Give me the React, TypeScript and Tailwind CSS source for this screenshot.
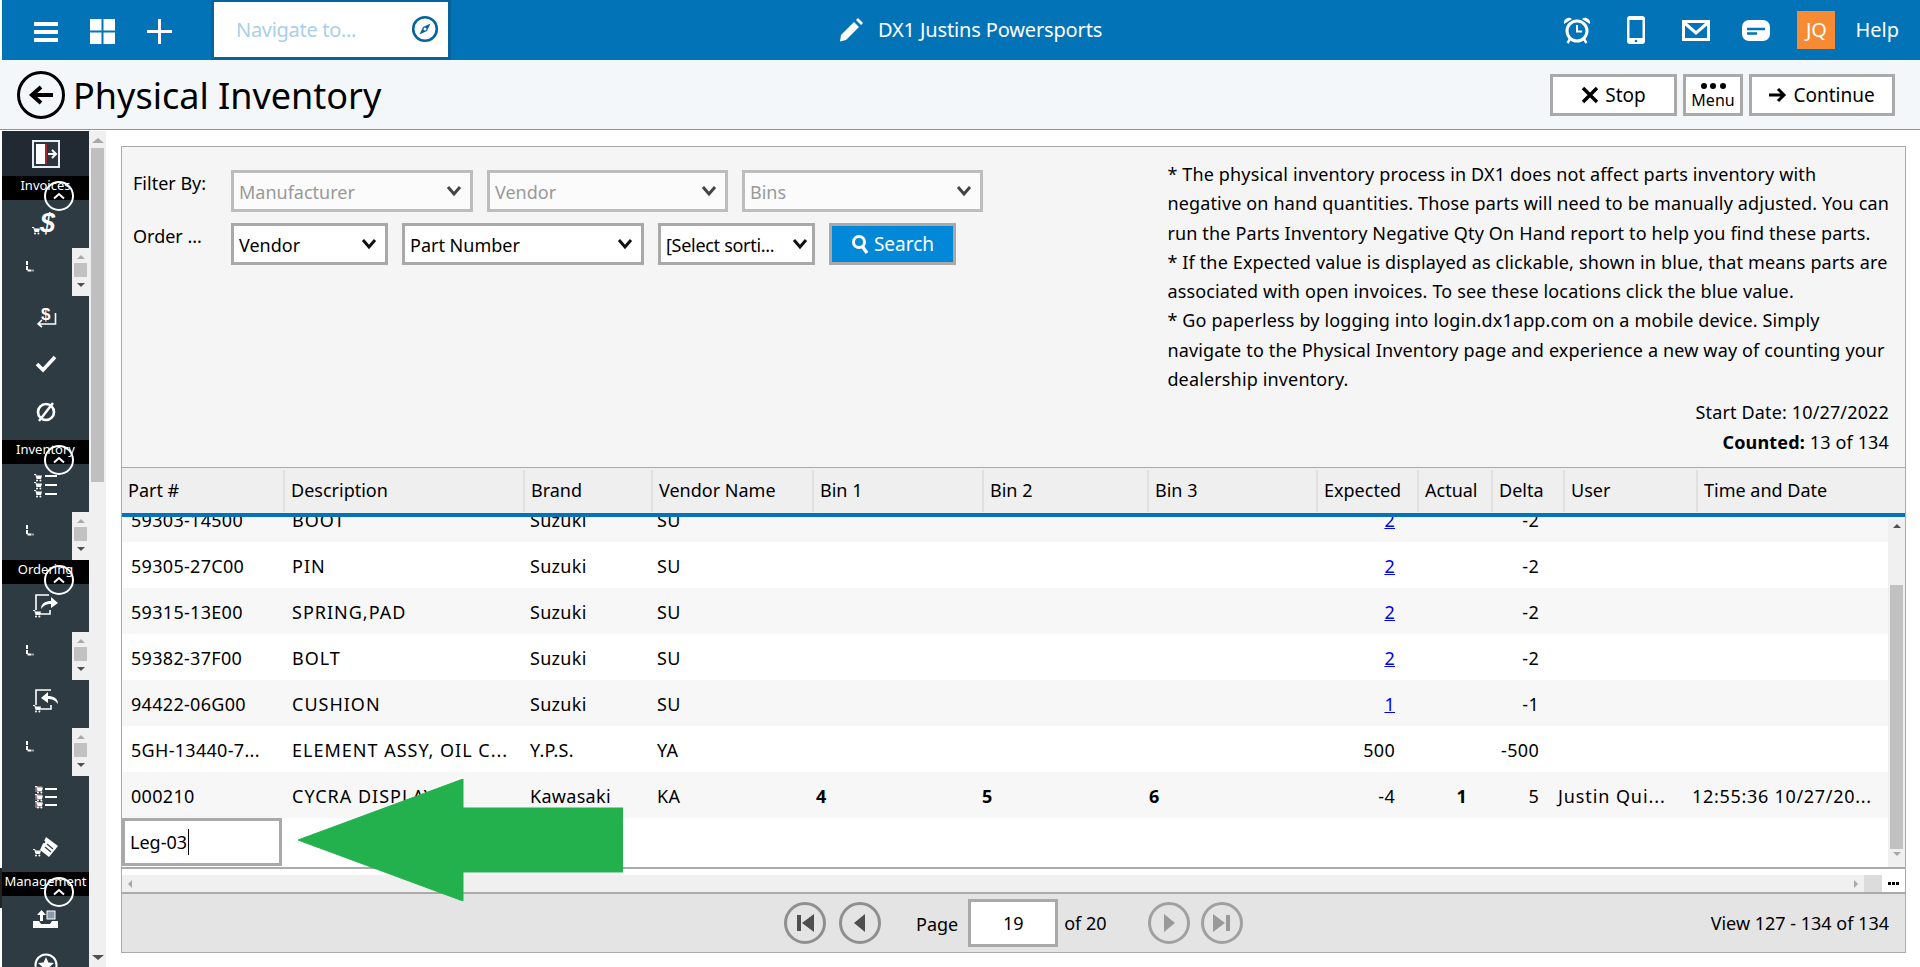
import type { ReactNode } from "react";

const FONT = "font-['Noto_Sans','Open_Sans',sans-serif]";
const HEAD_COLS = "grid grid-cols-[161px_240px_128px_161px_170px_165px_169px_101px_74px_72px_133px_210px]";
const BODY_COLS = "grid grid-cols-[163px_238px_127px_159px_166px_167px_167px_93px_72px_72px_140px_203px]";

const headers = ["Part #", "Description", "Brand", "Vendor Name", "Bin 1", "Bin 2", "Bin 3", "Expected", "Actual", "Delta", "User", "Time and Date"];

const rows = [
  { part: "59303-14500", desc: "BOOT", brand: "Suzuki", vendor: "SU", expected: "2", delta: "-2", link: true },
  { part: "59305-27C00", desc: "PIN", brand: "Suzuki", vendor: "SU", expected: "2", delta: "-2", link: true },
  { part: "59315-13E00", desc: "SPRING,PAD", brand: "Suzuki", vendor: "SU", expected: "2", delta: "-2", link: true },
  { part: "59382-37F00", desc: "BOLT", brand: "Suzuki", vendor: "SU", expected: "2", delta: "-2", link: true },
  { part: "94422-06G00", desc: "CUSHION", brand: "Suzuki", vendor: "SU", expected: "1", delta: "-1", link: true },
  { part: "5GH-13440-7...", desc: "ELEMENT ASSY, OIL C...", brand: "Y.P.S.", vendor: "YA", expected: "500", delta: "-500" },
  { part: "000210", desc: "CYCRA DISPLAY", brand: "Kawasaki", vendor: "KA", bin1: "4", bin2: "5", bin3: "6", expected: "-4", actual: "1", delta: "5", user: "Justin Qui...", time: "12:55:36 10/27/20..." },
];

const notes = [
  "* The physical inventory process in DX1 does not affect parts inventory with",
  "negative on hand quantities. Those parts will need to be manually adjusted. You can",
  "run the Parts Inventory Negative Qty On Hand report to help you find these parts.",
  "* If the Expected value is displayed as clickable, shown in blue, that means parts are",
  "associated with open invoices. To see these locations click the blue value.",
  "* Go paperless by logging into login.dx1app.com on a mobile device. Simply",
  "navigate to the Physical Inventory page and experience a new way of counting your",
  "dealership inventory.",
];

function Chevron({ color = "#111" }: { color?: string }) {
  return (
    <svg width="16" height="12" viewBox="0 0 16 12" className="shrink-0">
      <path d="M2 2l6 7 6-7" fill="none" stroke={color} strokeWidth="3" />
    </svg>
  );
}

function Select({ label, width, disabled }: { label: string; width: string; disabled?: boolean }) {
  return (
    <div className={`${width} h-[42px] flex items-center justify-between pl-[5px] pr-[8px] border-[3px] whitespace-nowrap ${disabled ? "border-[#bdbdbd] bg-[#fbfbfb] text-[#999]" : "border-[#a9a9a9] bg-white text-black"}`}>
      <span className="pt-[2px]">{label}</span>
      <Chevron color={disabled ? "#444" : "#111"} />
    </div>
  );
}

function TopButton({ children, width }: { children: ReactNode; width: string }) {
  return <div className={`${width} h-[42px] flex items-center justify-center gap-[6px] border-[3px] border-[#a9a9a9] bg-white`}>{children}</div>;
}

function Band({ label }: { label: string }) {
  return (
    <div className="relative h-[24px] bg-black text-white text-[13px] leading-[18px] text-center whitespace-nowrap">
      {label}
      <div className="absolute left-[42px] top-[5px] w-[30px] h-[30px] rounded-full border-[2.5px] border-white flex items-center justify-center">
        <svg width="14" height="8" viewBox="0 0 14 8"><path d="M2 6.5l5-4.5 5 4.5" fill="none" stroke="white" strokeWidth="2" /></svg>
      </div>
    </div>
  );
}

function SideIcon({ h, children }: { h: string; children: ReactNode }) {
  return <div className={`${h} flex items-center justify-center`}>{children}</div>;
}

function MiniScroll() {
  return (
    <div className="relative h-[48px] flex">
      <div className="w-[70px] flex items-center pl-[23px] pb-[12px]">
        <svg width="10" height="13" viewBox="0 0 10 13"><path d="M2 1v9.5h6.5" fill="none" stroke="white" strokeWidth="2" strokeDasharray="4 1" /></svg>
      </div>
      <div className="w-[17px] bg-[#f0f0f0] flex flex-col items-center pt-[7px]">
        <div className="w-0 h-0 border-x-[4px] border-x-transparent border-b-[4px] border-b-[#a8a8a8]" />
        <div className="w-[13px] h-[14px] bg-[#c1c1c1] mt-[4px]" />
        <div className="w-0 h-0 border-x-[4px] border-x-transparent border-t-[4px] border-t-[#505050] mt-[6px]" />
      </div>
    </div>
  );
}

function TinyCart({ x, y }: { x: number; y: number }) {
  return (
    <g transform={`translate(${x} ${y})`} fill="white">
      <path d="M0 0h2l.6 1.5H8L7 5H2.6L1.4 1H0z" />
      <circle cx="3" cy="6.6" r="1" />
      <circle cx="6.4" cy="6.6" r="1" />
    </g>
  );
}

function Sidebar() {
  return (
    <div className="w-[87px] shrink-0 h-[836px] bg-[#2e3b43] text-white overflow-hidden">
      <div className="h-[45px] bg-[#212a33] flex items-center justify-center">
        <svg width="28" height="28" viewBox="0 0 28 28">
          <rect x="1" y="1" width="26" height="26" fill="#2b3640" stroke="#e6eef8" strokeWidth="2" />
          <rect x="4" y="4" width="10" height="20" fill="white" />
          <rect x="13" y="4" width="2" height="20" fill="#a3232d" />
          <path d="M16 14h8M20 10l4 4-4 4" fill="none" stroke="white" strokeWidth="2" />
        </svg>
      </div>
      <Band label="Invoices" />
      <SideIcon h="h-[48px]">
        <svg width="28" height="26" viewBox="0 0 28 26" className="overflow-visible">
          <text x="8" y="21" fontSize="27" fontWeight="800" fontStyle="italic" fill="white" fontFamily="Liberation Sans, sans-serif">$</text>
          <TinyCart x={0} y={16} />
        </svg>
      </SideIcon>
      <MiniScroll />
      <SideIcon h="h-[40px]">
        <svg width="22" height="21" viewBox="0 0 22 21" className="overflow-visible">
          <text x="6" y="14" fontSize="17" fontWeight="700" fill="white" fontFamily="Liberation Sans, sans-serif">$</text>
          <path d="M20.5 7v11H3M7 14l-4 4 4 3" fill="none" stroke="white" strokeWidth="1.6" />
        </svg>
      </SideIcon>
      <SideIcon h="h-[56px]">
        <svg width="22" height="18" viewBox="0 0 22 18"><path d="M2 9l6 6L20 2" fill="none" stroke="white" strokeWidth="3.6" /></svg>
      </SideIcon>
      <SideIcon h="h-[40px]">
        <svg width="22" height="22" viewBox="0 0 22 22">
          <circle cx="11" cy="11" r="8" fill="none" stroke="white" strokeWidth="2.6" />
          <path d="M4 20L18 2" stroke="white" strokeWidth="2.4" />
        </svg>
      </SideIcon>
      <div className="h-[8px]" />
      <Band label="Inventory" />
      <SideIcon h="h-[48px] pb-[6px]">
        <svg width="24" height="25" viewBox="0 0 24 25">
          <TinyCart x={0} y={1} />
          <TinyCart x={0} y={9} />
          <TinyCart x={0} y={17} />
          <path d="M11 3h12M11 12h12M11 21h12" stroke="white" strokeWidth="2" />
        </svg>
      </SideIcon>
      <MiniScroll />
      <Band label="Ordering" />
      <SideIcon h="h-[48px] pb-[5px]">
        <svg width="26" height="24" viewBox="0 0 26 24">
          <path d="M3 16V1h13M6 20h11v-4" fill="none" stroke="white" strokeWidth="1.6" />
          <path d="M8 15c0-6 5-8 10-8V3l7 6-7 5v-4c-4 0-7 1-10 5z" fill="white" />
          <TinyCart x={0} y={16} />
        </svg>
      </SideIcon>
      <MiniScroll />
      <SideIcon h="h-[48px] pb-[6px]">
        <svg width="26" height="24" viewBox="0 0 26 24">
          <path d="M3 16V1h15M6 20h12V16" fill="none" stroke="white" strokeWidth="1.6" />
          <path d="M25 15c0-6-5-8-10-8V3L8 9l7 5v-4c4 0 7 1 10 5z" fill="white" />
          <TinyCart x={0} y={16} />
        </svg>
      </SideIcon>
      <MiniScroll />
      <SideIcon h="h-[45px] pb-[4px]">
        <svg width="24" height="24" viewBox="0 0 24 24">
          <rect x="1" y="1" width="7" height="6" fill="#8b6f78" />
          <rect x="1" y="9" width="7" height="6" fill="#8b6f78" />
          <rect x="1" y="17" width="7" height="6" fill="#8b6f78" />
          <TinyCart x={1} y={1} />
          <TinyCart x={1} y={9} />
          <TinyCart x={1} y={16} />
          <path d="M11 4h12M11 12h12M11 20h12" stroke="white" strokeWidth="2" />
        </svg>
      </SideIcon>
      <SideIcon h="h-[51px]">
        <svg width="26" height="22" viewBox="0 0 26 22">
          <path d="M13 1l12 9-9 11-9-7z" fill="white" />
          <path d="M14 8l6 5M12 11l6 5" stroke="#2e3b43" strokeWidth="1.2" />
          <circle cx="11" cy="6" r="1.3" fill="#2e3b43" />
          <TinyCart x={0} y={13} />
        </svg>
      </SideIcon>
      <Band label="Management" />
      <SideIcon h="h-[45px]">
        <svg width="25" height="18" viewBox="0 0 25 18">
          <path d="M0 11h6l2 3h9l2-3h6v7H0z" fill="white" />
          <path d="M7 11V5H4l4.500-5L13 5h-3v6z" fill="white" />
          <rect x="14" y="1" width="8" height="8" fill="#8d99a6" stroke="white" />
        </svg>
      </SideIcon>
      <div className="h-[27px] flex justify-center pt-[12px]">
        <svg width="24" height="24" viewBox="0 0 24 24" className="shrink-0">
          <circle cx="12" cy="12" r="10.500" fill="none" stroke="white" strokeWidth="2" />
          <path d="M12 4l2.400 5.500 5.600.500-4.200 3.800 1.300 5.700-5.100-3-5.100 3 1.300-5.700L4 10l5.600-.500z" fill="white" />
        </svg>
      </div>
    </div>
  );
}

function PageScroll() {
  return (
    <div className="w-[17px] shrink-0 h-[836px] bg-[#f0f0f0] flex flex-col items-center">
      <div className="mt-[7px] w-0 h-0 border-x-[6px] border-x-transparent border-b-[5px] border-b-[#a8a8a8]" />
      <div className="mt-[5px] w-[13px] h-[334px] bg-[#bfbfbf]" />
      <div className="mt-auto mb-[7px] w-0 h-0 border-x-[6px] border-x-transparent border-t-[5px] border-t-[#505050]" />
    </div>
  );
}

function PagerButton({ children, dim }: { children: ReactNode; dim?: boolean }) {
  return (
    <div className={`w-[42px] h-[42px] shrink-0 rounded-full border-[3px] flex items-center justify-center ${dim ? "border-[#a0a0a0] text-[#999]" : "border-[#8f8f8f] text-[#4f4f4f]"}`}>
      <svg width="24" height="24" viewBox="0 0 24 24" fill="currentColor">{children}</svg>
    </div>
  );
}

function Cell({ children, right, bold, className = "" }: { children?: ReactNode; right?: boolean; bold?: boolean; className?: string }) {
  return <div className={`pr-[2px] whitespace-nowrap overflow-hidden ${right ? "text-right pr-[7px]" : ""} ${bold ? "font-bold" : ""} ${className || "pl-[7px]"}`}>{children}</div>;
}

export default function App() {
  return (
    <div className={`relative w-[1920px] h-[967px] overflow-hidden bg-white text-[18px] text-black ${FONT}`}>
      {/* top bar */}
      <div className="ml-[2px] h-[60px] flex items-center bg-[#0273b7] text-white">
        <svg width="24" height="20" viewBox="0 0 24 20" className="ml-[32px] mt-[3px]" fill="white">
          <rect width="24" height="4" y="0" />
          <rect width="24" height="4" y="8" />
          <rect width="24" height="4" y="16" />
        </svg>
        <svg width="25" height="25" viewBox="0 0 25 25" className="ml-[32px] mt-[2px]" fill="white">
          <rect width="11.500" height="11.500" />
          <rect x="13.500" width="11.500" height="11.500" />
          <rect y="13.500" width="11.500" height="11.500" />
          <rect x="13.500" y="13.500" width="11.500" height="11.500" />
        </svg>
        <svg width="25" height="25" viewBox="0 0 25 25" className="ml-[32px] mt-[2px]" fill="white">
          <rect x="11" width="3" height="25" />
          <rect y="11" width="25" height="3" />
        </svg>
        <div className="ml-[39px] w-[240px] h-[60px] pb-[1px] border-x-[3px] border-b-[3px] border-t-[2px] border-[#05649d] bg-white flex items-center justify-between pl-[22px] pr-[9px]">
          <span className="text-[#a9cfe8] text-[20px] tracking-[-0.3px] pt-[1px]">Navigate to...</span>
          <svg width="28" height="28" viewBox="0 0 28 28">
            <circle cx="14" cy="14" r="11.800" fill="none" stroke="#05649d" strokeWidth="2.600" />
            <path d="M19.500 8.500L16 16 8.500 19.500 12 12z" fill="#05649d" />
            <circle cx="14" cy="14" r="1.500" fill="white" />
          </svg>
        </div>
        <svg width="26" height="26" viewBox="0 0 26 26" className="ml-[387px]" fill="white">
          <path d="M3 18L16 5l5 5L8 23l-6 1.500z" />
          <path d="M18 3l2-2 5 5-2 2z" />
        </svg>
        <span className="ml-[14px] text-[20px] tracking-[-0.15px]">DX1 Justins Powersports</span>
        <div className="ml-auto flex items-center">
          <svg width="28" height="28" viewBox="0 0 28 28">
            <circle cx="14" cy="15" r="10" fill="none" stroke="white" strokeWidth="3" />
            <path d="M14 9v6.500h5" fill="none" stroke="white" strokeWidth="2" />
            <path d="M1 8a5 5 0 0 1 8-5zM27 8a5 5 0 0 0-8-5z" fill="white" />
            <path d="M7 23l-2.500 4M21 23l2.500 4" stroke="white" strokeWidth="2.400" />
          </svg>
          <svg width="18" height="28" viewBox="0 0 18 28" className="ml-[36px]">
            <rect width="18" height="28" rx="3" fill="white" />
            <rect x="2.500" y="4" width="13" height="18" fill="#0273b7" />
            <circle cx="9" cy="25" r="1.300" fill="#0273b7" />
          </svg>
          <svg width="28" height="21" viewBox="0 0 28 21" className="ml-[37px]">
            <rect x="1.500" y="1.500" width="25" height="18" fill="none" stroke="white" strokeWidth="3" />
            <path d="M2 2.500L14 13 26 2.500" fill="none" stroke="white" strokeWidth="3" />
          </svg>
          <svg width="28" height="21" viewBox="0 0 28 21" className="ml-[32px]">
            <rect width="28" height="21" rx="7" fill="white" />
            <path d="M5 9h18M5 13.500h10" stroke="#0273b7" strokeWidth="2.400" />
          </svg>
          <div className="ml-[27px] w-[38px] h-[38px] bg-[#f68b33] flex items-center justify-center text-[20px]">JQ</div>
          <span className="ml-[20px] mr-[21px] text-[20px]">Help</span>
        </div>
      </div>

      {/* page title */}
      <div className="h-[70px] pl-[2px] flex items-center justify-between bg-[#f3f7fa] border-b border-[#5ba3d6]">
        <div className="flex items-center">
          <div className="ml-[15px] w-[48px] h-[48px] rounded-full border-[3px] border-black flex items-center justify-center">
            <svg width="26" height="22" viewBox="0 0 26 22"><path d="M25 11H6M13 3l-9 8 9 8" fill="none" stroke="black" strokeWidth="4" /></svg>
          </div>
          <h1 className="ml-[8px] mt-[2px] text-[36px] leading-none">Physical Inventory</h1>
        </div>
        <div className="flex items-center gap-[6px] mr-[25px]">
          <TopButton width="w-[127px]">
            <svg width="18" height="18" viewBox="0 0 18 18"><path d="M2 2l14 14M16 2L2 16" stroke="black" strokeWidth="3.400" /></svg>
            <span className="pt-[1px] text-[19px]">Stop</span>
          </TopButton>
          <div className="w-[60px] h-[42px] flex flex-col items-center border-[3px] border-[#a9a9a9] bg-white">
            <div className="mt-[6px] flex gap-[3.500px]">
              <div className="w-[6px] h-[6px] rounded-full bg-black" />
              <div className="w-[6px] h-[6px] rounded-full bg-black" />
              <div className="w-[6px] h-[6px] rounded-full bg-black" />
            </div>
            <span className="text-[16px] leading-[20px] mt-[1px]">Menu</span>
          </div>
          <TopButton width="w-[146px]">
            <svg width="18" height="16" viewBox="0 0 18 16"><path d="M0 8h15M9 2l6 6-6 6" fill="none" stroke="black" strokeWidth="3" /></svg>
            <span className="pt-[1px] text-[19px]">Continue</span>
          </TopButton>
        </div>
      </div>

      <div className="mt-[1px] ml-[2px] flex">
        <Sidebar />
        <PageScroll />
        <div className="ml-[15px] mt-[15px] w-[1785px] h-[807px] border border-[#aaa] flex flex-col">
          {/* filters and notes */}
          <div className="h-[320px] shrink-0 bg-[#f5f5f5] flex justify-between">
            <div className="pl-[11px] pt-[23px] flex flex-col gap-[11px]">
              <div className="flex items-start">
                <div className="w-[98px]">Filter By:</div>
                <div className="flex gap-[14px]">
                  <Select label="Manufacturer" width="w-[242px]" disabled />
                  <Select label="Vendor" width="w-[241px]" disabled />
                  <Select label="Bins" width="w-[241px]" disabled />
                </div>
              </div>
              <div className="flex items-start">
                <div className="w-[98px]">Order ...</div>
                <div className="flex gap-[14px]">
                  <Select label="Vendor" width="w-[157px]" />
                  <Select label="Part Number" width="w-[242px]" />
                  <div className="w-[157px] h-[42px] flex items-center justify-between pl-[5px] pr-[4px] border-[3px] border-[#a9a9a9] bg-white whitespace-nowrap">
                    <span className="pt-[2px] tracking-[-0.3px]">[Select sorti...</span>
                    <Chevron />
                  </div>
                  <div className="w-[127px] h-[42px] border-[3px] border-[#a9a9a9] bg-[#0288d8] text-white flex items-center justify-center gap-[5px]">
                    <svg width="18" height="20" viewBox="0 0 18 20">
                      <circle cx="8" cy="8" r="5.500" fill="none" stroke="white" strokeWidth="3" />
                      <path d="M11 12l5 7" stroke="white" strokeWidth="3.400" />
                    </svg>
                    <span className="pt-[1px] text-[19px]">Search</span>
                  </div>
                </div>
              </div>
            </div>
            <div className="pt-[13px] pr-[16px] flex flex-col leading-[29.300px] whitespace-nowrap tracking-[0.15px]">
              {notes.map((line) => (
                <div key={line}>{line}</div>
              ))}
              <div className="text-right mt-[4px]">Start Date: 10/27/2022</div>
              <div className="text-right"><b>Counted:</b> 13 of 134</div>
            </div>
          </div>

          {/* grid header */}
          <div className={`${HEAD_COLS} h-[46px] shrink-0 items-center bg-[#efefef] border-t border-[#aaa]`}>
            {headers.map((h, i) => (
              <div key={h} className={`h-[42px] flex items-center pl-[6px] ${i > 0 ? "border-l-2 border-[#e0e0e0]" : ""}`}>{h}</div>
            ))}
          </div>
          <div className="h-[4px] shrink-0 bg-[#0273b7]" />

          {/* grid body */}
          <div className="h-[350px] shrink-0 flex overflow-hidden">
            <div className="flex-1 overflow-hidden">
              <div className="-mt-[21px]">
                {rows.map((r, i) => (
                  <div key={r.part} className={`${BODY_COLS} h-[46px] pt-[2px] items-center tracking-[0.3px] ${i % 2 === 0 ? "bg-[#f7f7f7]" : "bg-white"}`}>
                    <Cell className="pl-[9px]">{r.part}</Cell>
                    <Cell className="pl-[7px] tracking-[1px]">{r.desc}</Cell>
                    <Cell>{r.brand}</Cell>
                    <Cell>{r.vendor}</Cell>
                    <Cell bold>{r.bin1}</Cell>
                    <Cell bold>{r.bin2}</Cell>
                    <Cell bold>{r.bin3}</Cell>
                    <Cell right>{r.link ? <a href="#" className="text-[#0000ee] underline">{r.expected}</a> : r.expected}</Cell>
                    <Cell right bold>{r.actual}</Cell>
                    <Cell right>{r.delta}</Cell>
                    <Cell className="pl-[12px] tracking-[0.9px]">{r.user}</Cell>
                    <Cell className="pl-[6px] tracking-[0.7px]">{r.time}</Cell>
                  </div>
                ))}
              </div>
              <div className="h-[48px]">
                <div className="w-[160px] h-[48px] border-[3px] border-[#a9a9a9] bg-white flex items-center pl-[5px]">
                  Leg-03<span className="ml-[1px] w-px h-[26px] bg-black" />
                </div>
              </div>
            </div>
            <div className="w-[17px] shrink-0 bg-[#f0f0f0] flex flex-col items-center">
              <div className="mt-[7px] w-0 h-0 border-x-[4px] border-x-transparent border-b-[4px] border-b-[#505050]" />
              <div className="mt-[57px] w-[13px] h-[264px] bg-[#c1c1c1]" />
              <div className="mt-[3px] w-0 h-0 border-x-[4px] border-x-transparent border-t-[4px] border-t-[#a8a8a8]" />
            </div>
          </div>
          <div className="h-[2px] shrink-0 bg-[#aaa]" />

          {/* horizontal scrollbar */}
          <div className="h-[23px] shrink-0 pt-[6px] flex items-start">
            <div className="flex-1 h-[17px] bg-[#f0f0f0] flex items-center justify-between pl-[6px] pr-[6px]">
              <div className="w-0 h-0 border-y-[4px] border-y-transparent border-r-[4px] border-r-[#a8a8a8]" />
              <div className="w-0 h-0 border-y-[4px] border-y-transparent border-l-[4px] border-l-[#a8a8a8]" />
            </div>
            <div className="w-[18px] h-[17px] bg-[#dcdcdc]" />
            <div className="w-[23px] h-[17px] bg-white flex items-center justify-center gap-[1px]">
              <div className="w-[3px] h-[3px] bg-black" />
              <div className="w-[3px] h-[3px] bg-black" />
              <div className="w-[3px] h-[3px] bg-black" />
            </div>
          </div>

          {/* pager */}
          <div className="h-[60px] shrink-0 bg-[#e4e4e4] border-t-2 border-[#aaa] flex items-center pl-[662px] pr-[16px]">
            <PagerButton><rect x="4" y="4" width="4" height="16" /><path d="M21 3v18L9 12z" /></PagerButton>
            <div className="ml-[13px]"><PagerButton><path d="M17 3v18L6 12z" /></PagerButton></div>
            <span className="ml-[35px] mt-[3px]">Page</span>
            <div className="ml-[10px] w-[90px] h-[48px] border-[3px] border-[#a9a9a9] bg-white flex items-center justify-center">19</div>
            <span className="ml-[6px] mt-[1px]">of 20</span>
            <div className="ml-[41px]"><PagerButton dim><path d="M7 3v18l11-9z" /></PagerButton></div>
            <div className="ml-[11px]"><PagerButton dim><rect x="16" y="4" width="4" height="16" /><path d="M3 3v18l12-9z" /></PagerButton></div>
            <span className="ml-auto">View 127 - 134 of 134</span>
          </div>
        </div>
      </div>

      {/* green annotation arrow over the grid */}
      <svg width="325" height="122" viewBox="0 0 325 122" className="absolute left-[298px] top-[779px]">
        <path d="M0 61L165 0V29H325V93H165V122z" fill="#23b14d" stroke="#23b14d" strokeWidth="1" strokeLinejoin="round" />
      </svg>

      {/* leftover tooltip edge at the window border */}
      <div className="absolute left-0 top-[868px] w-[2px] h-[40px] bg-[#222]" />
    </div>
  );
}
